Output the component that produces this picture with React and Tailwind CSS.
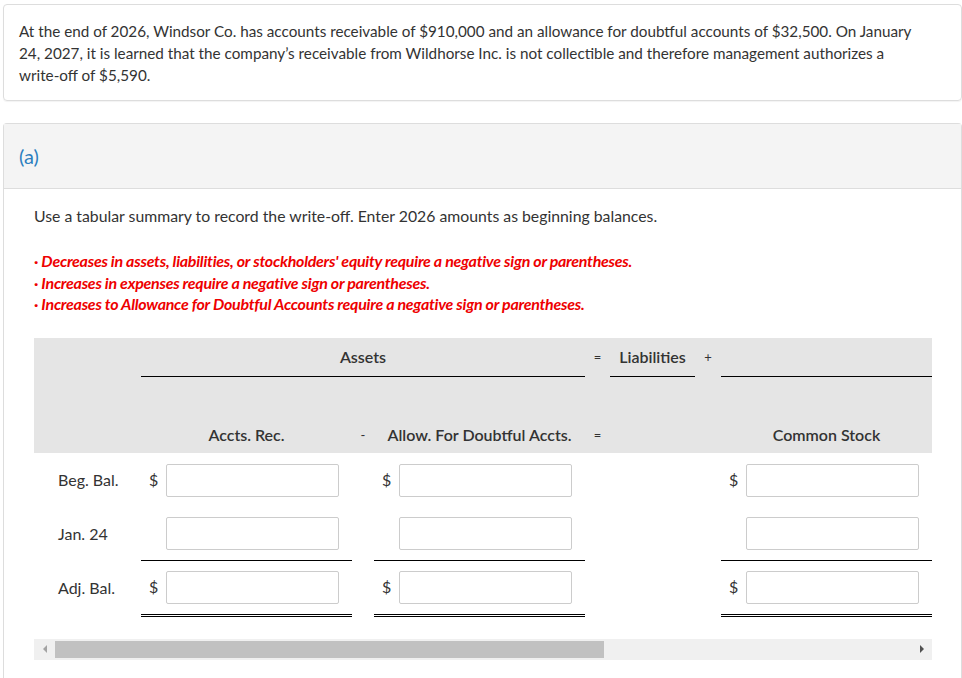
import React from "react";

const rows = [
    { label: "Beg. Bal.", dollar: true, line: "none" },
    { label: "Jan. 24", dollar: false, line: "single" },
    { label: "Adj. Bal.", dollar: true, line: "double" },
];

const lineClass = {
    none: "",
    single: "border-b border-black",
    double: "border-b-[3px] border-double border-black",
};

const padClass = {
    none: "pt-[11px] pb-[10px]",
    single: "pt-[10px] pb-[10px]",
    double: "pt-[10px] pb-[10px]",
};

const MoneyCell = ({ row }) => (
    <div className={`w-[211px] flex items-center ${padClass[row.line]} ${lineClass[row.line]}`}>
        <span className="w-[25px] pl-[8px] text-[16px] text-[#333]">
            {row.dollar ? "$" : ""}
        </span>
        <input
            type="text"
            className="w-[173px] h-[33px] border border-[#cccccc] rounded-[2px] bg-white outline-none"
        />
    </div>
);

const App = () => {
    return (
        <div
            className="min-h-[678px] bg-white pl-[3px] pt-[4px] text-[#333]"
            style={{ fontFamily: "Lato, 'Open Sans', sans-serif" }}
        >
            {/* Question card */}
            <div className="border border-[#dddddd] rounded-[4px] pl-[15px] pr-[35px] pt-[15px] pb-[14px] shadow-[0_1px_1px_rgba(0,0,0,0.05)]">
                <p className="text-[15.25px] leading-[22px]">
                    At the end of 2026, Windsor Co. has accounts receivable of $910,000 and an allowance for doubtful accounts of $32,500. On January 24, 2027, it is learned that the company’s receivable from Wildhorse Inc. is not collectible and therefore management authorizes a write-off of $5,590.
                </p>
            </div>

            {/* Part (a) */}
            <div className="mt-[22px] border border-[#dddddd] rounded-t-[4px] border-b-0">
                <div className="h-[65px] bg-[#f4f4f4] border-b border-[#dddddd] flex items-center px-[15px]">
                    <span className="text-[20px] text-[#2c7fbf]">(a)</span>
                </div>

                <div className="pl-[30px] pt-[16px]">
                    <p className="text-[15.8px] leading-[22px]">
                        Use a tabular summary to record the write-off. Enter 2026 amounts as beginning balances.
                    </p>

                    <div className="mt-[23px] text-[16px] leading-[21.5px] font-bold italic text-[#ee0000] tracking-[-0.27px]">
                        <p>· Decreases in assets, liabilities, or stockholders' equity require a negative sign or parentheses.</p>
                        <p>· Increases in expenses require a negative sign or parentheses.</p>
                        <p>· Increases to Allowance for Doubtful Accounts require a negative sign or parentheses.</p>
                    </div>

                    {/* Tabular summary */}
                    <div className="mt-[23px] w-[898px]">
                        {/* Header */}
                        <div className="bg-[#e5e5e5] text-[16px] leading-[20px] font-semibold">
                            <div className="flex items-end pt-[9px]">
                                <div className="w-[107px]" />
                                <div className="w-[444px] text-center pb-[9px] border-b border-black">Assets</div>
                                <div className="w-[25px] text-center pb-[10px] font-normal text-[13px]">=</div>
                                <div className="w-[85px] text-center pb-[9px] border-b border-black">Liabilities</div>
                                <div className="w-[26px] text-center pb-[10px] font-normal text-[13px]">+</div>
                                <div className="w-[211px] pb-[9px] border-b border-black">&nbsp;</div>
                            </div>
                            <div className="flex items-end h-[76px] pb-[8px]">
                                <div className="w-[107px]" />
                                <div className="w-[211px] text-center">Accts. Rec.</div>
                                <div className="w-[22px] text-center font-normal text-[13px]">-</div>
                                <div className="w-[211px] text-center">Allow. For Doubtful Accts.</div>
                                <div className="w-[25px] text-center font-normal text-[13px]">=</div>
                                <div className="w-[85px]" />
                                <div className="w-[26px]" />
                                <div className="w-[211px] text-center">Common Stock</div>
                            </div>
                        </div>

                        {/* Rows */}
                        {rows.map((row) => (
                            <div key={row.label} className="flex items-start">
                                <div className="w-[107px] pl-[24px] pt-[15px] text-[16px]">{row.label}</div>
                                <MoneyCell row={row} />
                                <div className="w-[22px]" />
                                <MoneyCell row={row} />
                                <div className="w-[25px]" />
                                <div className="w-[85px]" />
                                <div className="w-[26px]" />
                                <MoneyCell row={row} />
                            </div>
                        ))}

                        {/* Horizontal scrollbar */}
                        <div className="mt-[22px] h-[21px] bg-[#f0f0f0] flex items-center">
                            <div className="w-[21px] flex justify-center">
                                <div className="w-0 h-0 border-y-[4px] border-y-transparent border-r-[4px] border-r-[#a3a3a3]" />
                            </div>
                            <div className="w-[549px] h-[17px] bg-[#c1c1c1]" />
                            <div className="flex-1" />
                            <div className="w-[21px] flex justify-center">
                                <div className="w-0 h-0 border-y-[4px] border-y-transparent border-l-[4px] border-l-[#505050]" />
                            </div>
                        </div>
                        <div className="h-[20px]" />
                    </div>
                </div>
            </div>
        </div>
    );
};

export default App;
